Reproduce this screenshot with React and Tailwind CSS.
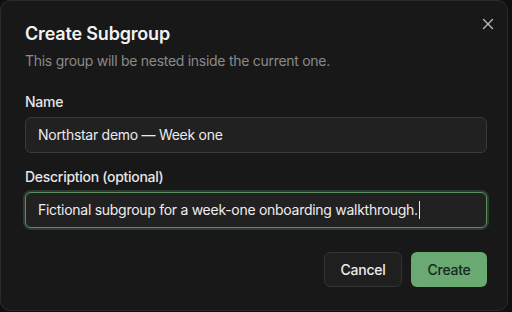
import React from 'react';
import { X } from 'lucide-react';

const font = { fontFamily: 'Inter, "Noto Sans", sans-serif' };

const App = () => {
  return (
    <div className="w-[512px] h-[312px] bg-[#0f0f0f]" style={font}>
      <div className="relative w-[508px] h-[311px] rounded-[10px] border border-[#2b2b2b] bg-[#181818] pl-6 pr-5 pt-[19px]">
        {/* Close */}
        <button className="absolute right-[10px] top-[14px] text-[#bdbdbd]">
          <X size={18} strokeWidth={1.75} />
        </button>

        {/* Header */}
        <h2 className="text-[18px] leading-7 font-semibold tracking-[-0.01em] text-[#f2f2f2]">Create Subgroup</h2>
        <p className="mt-[3px] text-sm leading-5 tracking-[-0.02em] text-[#8a8a8a]">
          This group will be nested inside the current one.
        </p>

        {/* Fields */}
        <div className="mt-[21px]">
          <label className="block text-sm leading-5 font-medium tracking-[-0.02em] text-[#e6e6e6]">Name</label>
          <div className="mt-[5px] h-9 rounded-md border border-[#3a3a3a] bg-[#212121] px-3 flex items-center text-sm tracking-[-0.02em] text-[#ebebeb]">
            Northstar demo — Week one
          </div>
        </div>

        <div className="mt-[14px]">
          <label className="block text-sm leading-5 font-medium tracking-[-0.02em] text-[#e6e6e6]">Description (optional)</label>
          <div className="mt-[5px] h-9 rounded-md border border-[#5b8f60] ring-2 ring-[#5b8f60]/30 bg-[#212121] px-3 flex items-center text-sm tracking-[-0.02em] text-[#ededed]">
            Fictional subgroup for a week-one onboarding walkthrough.
            <span className="ml-px w-px h-[18px] bg-[#f0f0f0]"></span>
          </div>
        </div>

        {/* Actions */}
        <div className="mt-6 flex justify-end gap-[9px]">
          <button className="h-[35px] w-[78px] rounded-md border border-[#333] bg-[#1f1f1f] text-sm font-medium tracking-[-0.02em] text-[#ececec]">
            Cancel
          </button>
          <button className="h-[35px] w-[76px] rounded-md bg-[#6aa971] text-sm font-medium tracking-[-0.02em] text-[#16291b]">
            Create
          </button>
        </div>
      </div>
    </div>
  );
};

export default App;
